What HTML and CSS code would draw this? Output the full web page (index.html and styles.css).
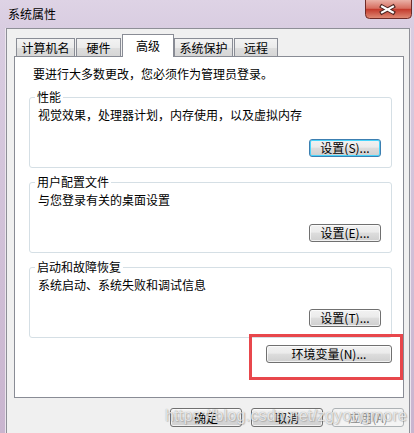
FILE: index.html
```html
<!DOCTYPE html>
<html lang="zh-CN">
<head>
<meta charset="utf-8">
<title>系统属性</title>
<link rel="stylesheet" href="styles.css">
</head>
<body>
<div class="window">
  <div class="titlebar">
    <span class="title">系统属性</span>
    <div class="close">
      <svg width="47" height="19" viewBox="0 0 47 19">
        <defs>
          <linearGradient id="cg" x1="0" y1="0" x2="0" y2="1">
            <stop offset="0" stop-color="#eab1a7"/>
            <stop offset="0.45" stop-color="#d66d5f"/>
            <stop offset="0.5" stop-color="#c33a2c"/>
            <stop offset="1" stop-color="#e08d78"/>
          </linearGradient>
        </defs>
        <path d="M0.5 0 V14.5 Q0.5 18.5 4.5 18.5 H42.5 Q46.5 18.5 46.5 14.5 V0" fill="url(#cg)" stroke="#6e2b27"/>
        <path d="M17 6.5 L28 12.5 M28 6.5 L17 12.5" stroke="#4b2420" stroke-width="4.2" stroke-linecap="square"/>
        <path d="M17 6.5 L28 12.5 M28 6.5 L17 12.5" stroke="#ffffff" stroke-width="2" stroke-linecap="square"/>
      </svg>
    </div>
  </div>
  <div class="client">
    <div class="tabs">
      <div class="tab t1">计算机名</div>
      <div class="tab t2">硬件</div>
      <div class="tab active t3">高级</div>
      <div class="tab t4">系统保护</div>
      <div class="tab t5">远程</div>
    </div>
    <div class="panel">
      <p class="note">要进行大多数更改，您必须作为管理员登录。</p>
      <fieldset class="group">
        <legend>性能</legend>
        <p class="desc">视觉效果，处理器计划，内存使用，以及虚拟内存</p>
        <div class="actions"><button class="btn focus">设置(S)...</button></div>
      </fieldset>
      <fieldset class="group">
        <legend>用户配置文件</legend>
        <p class="desc">与您登录有关的桌面设置</p>
        <div class="actions"><button class="btn">设置(E)...</button></div>
      </fieldset>
      <fieldset class="group">
        <legend>启动和故障恢复</legend>
        <p class="desc">系统启动、系统失败和调试信息</p>
        <div class="actions"><button class="btn">设置(T)...</button></div>
      </fieldset>
      <div class="env-row"><button class="btn env">环境变量(N)...</button></div>
      <div class="highlight"></div>
    </div>
    <div class="footer">
      <button class="btn fbtn">确定</button>
      <button class="btn fbtn">取消</button>
      <button class="btn fbtn" disabled>应用(A)</button>
    </div>
    <div class="watermark">https://blog.csdn.net/zgyongmore</div>
  </div>
</div>
</body>
</html>
```
FILE: styles.css
```css
* { box-sizing: border-box; }
html, body { margin: 0; padding: 0; }
body {
  width: 414px;
  height: 433px;
  overflow: hidden;
  font-family: "Noto Sans CJK SC", "Liberation Sans", sans-serif;
  font-size: 12px;
  color: #000;
}
.window {
  position: relative;
  width: 414px;
  height: 433px;
  display: flex;
  flex-direction: column;
  background: linear-gradient(180deg, #ded3e5 0px, #d9cde1 28px, #c9b5cf 100%);
}
.titlebar {
  height: 28px;
  display: flex;
  justify-content: space-between;
  align-items: flex-start;
  flex: none;
}
.title {
  padding: 7px 0 0 8px;
  line-height: 14px;
  color: #000;
}
.close {
  margin-right: 2px;
  width: 47px;
  height: 19px;
  display: flex;
}
.client {
  position: relative;
  flex: 1;
  margin: 0 4px 0 6px;
  border: 1px solid #8e8f97;
  border-bottom: none;
  background: #f0f0f0;
  padding: 5px 0 0 7px;
  box-shadow: -1px 0 0 #ece5ee, 1px 0 0 #ece5ee;
}
.tabs {
  position: relative;
  z-index: 1;
  display: flex;
  align-items: flex-end;
  height: 23px;
  margin-bottom: -1px;
  padding-left: 2px;
}
.tab {
  height: 18px;
  margin-bottom: 1px;
  border: 1px solid #898c95;
  border-bottom: none;
  background: linear-gradient(180deg, #f3f3f3 0%, #ebebeb 50%, #dedede 50%, #d6d6d6 100%);
  text-align: center;
  line-height: 16px;
  padding-top: 1px;
  flex: none;
}
.t1 { width: 59px; margin-right: 1px; }
.t2 { width: 45px; margin-right: 1px; }
.t3 { width: 52px; }
.t4 { width: 59px; margin-right: 1px; }
.t5 { width: 44px; }
.tab.active {
  height: 23px;
  margin-bottom: 0;
  background: #fff;
  padding-top: 3px;
  line-height: 15px;
}
.panel {
  position: relative;
  width: 390px;
  height: 342px;
  border: 1px solid #898c95;
  background: #fff;
  padding: 9px 11px 0 14px;
}
.note {
  margin: 0 0 8px 4px;
  line-height: 16px;
}
.group {
  margin: 0 0 7px 0;
  padding: 3px 10px 10px 8px;
  border: 1px solid #d5dfe5;
  border-radius: 3px;
  min-inline-size: 0;
}
.group legend {
  padding: 0 2px;
  margin-left: -3px;
  line-height: 14px;
}
.desc {
  margin: 0;
  line-height: 16px;
}
.actions {
  display: flex;
  justify-content: flex-end;
  margin-top: 16px;
}
.btn {
  font-family: "Noto Sans CJK SC", "Liberation Sans", sans-serif;
  font-size: 12px;
  color: #000;
  height: 18px;
  width: 72px;
  padding: 0;
  line-height: 16px;
  border: 1px solid #707070;
  border-radius: 3px;
  background: linear-gradient(180deg, #f2f2f2 0%, #ebebeb 45%, #dddddd 50%, #cfcfcf 100%);
  box-shadow: inset 0 0 0 1px rgba(255,255,255,0.7);
}
.btn.focus {
  border-color: #3c7fb1;
  box-shadow: inset 0 0 0 1px #48d4fb;
}
.env-row {
  display: flex;
  justify-content: flex-end;
  margin-top: 7px;
}
.btn.env { width: 126px; }
.highlight {
  position: absolute;
  left: 234px;
  top: 277px;
  width: 154px;
  height: 46px;
  border: 3px solid #e8474c;
}
.footer {
  display: flex;
  justify-content: flex-end;
  gap: 9px;
  padding: 10px 5px 0 0;
}
.btn.fbtn { height: 19px; }
.btn.fbtn:disabled {
  color: #8d8d8d;
  border-color: #adb2b5;
  background: #f4f4f4;
  box-shadow: none;
}
.watermark {
  position: absolute;
  left: 158px;
  top: 377px;
  font-family: "Liberation Sans", sans-serif;
  font-size: 16px;
  letter-spacing: 0.2px;
  line-height: 20px;
  color: rgba(255, 255, 255, 0.75);
  text-shadow: 0 0 1px rgba(80, 80, 80, 0.55), 1px 1px 1px rgba(120, 120, 120, 0.35);
  pointer-events: none;
  white-space: nowrap;
}
```
